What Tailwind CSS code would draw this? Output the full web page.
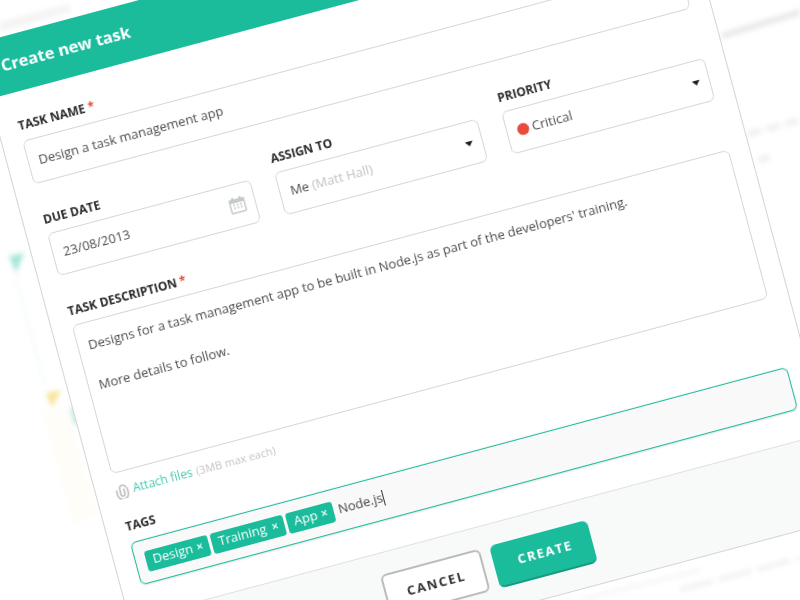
<!doctype html>
<html>
<head>
<meta charset="utf-8">
<script src="https://cdn.jsdelivr.net/npm/@tailwindcss/browser@4"></script>
</head>
<body class="m-0 bg-white font-['Open_Sans',sans-serif]">
<div class="relative w-[800px] h-[600px] overflow-hidden bg-white">
  <svg class="absolute inset-0 blur-[2.5px]" width="800" height="600" viewBox="0 0 800 600" fill="none">
    <path d="M-5 28L70 8" stroke="#f4f4f4" stroke-width="9"/>
    <path d="M722 36L800 12" stroke="#e8e8e8" stroke-width="6"/>
    <path d="M748 134L800 120" stroke="#f0f0f0" stroke-width="6" stroke-dasharray="14 5"/>
    <path d="M758 160L770 157" stroke="#f0f0f0" stroke-width="6"/>
    <path d="M9 256L24 253L16 273Z" fill="#a5e5d8"/>
    <path d="M46 393L61 390L52 408Z" fill="#f8e39b"/>
    <path d="M70 408L76 406L80 425L74 424Z" fill="#bcece2"/>
    <path d="M15 275L45 385" stroke="#fafdfc" stroke-width="6"/>
    <path d="M55 410L85 520" stroke="#fffdf8" stroke-width="26"/>
    <path d="M615 567L700 546" stroke="#f5f5f5" stroke-width="4" stroke-dasharray="18 12"/>
    <path d="M680 590L800 558" stroke="#f2f2f2" stroke-width="5" stroke-dasharray="34 6"/>
    <path d="M580 600L700 570" stroke="#f6f6f6" stroke-width="4"/>
  </svg>

  <div class="absolute left-0 top-0 origin-top-left rotate-[-15deg]">
    <div class="absolute left-[-36px] top-[36px] w-[722px] h-[684px] flex flex-col bg-white border-x border-b border-[#d4d4d4] blur-[0.35px]">
      <div class="h-[57px] shrink-0 -mx-px bg-[#1abc9c] flex items-center pl-[20px] pb-[1px] text-white font-bold text-[16.5px]">Create new task</div>

      <div class="flex-1 px-[20px] pt-[24px] flex flex-col text-[13px] text-[#4d4d4d]">
        <div class="h-5 leading-5 text-[12px] font-bold text-[#2a2a2a] uppercase mb-[5px]">Task name <span class="text-[#e74c3c]">*</span></div>
        <div class="h-[45px] border border-[#d6d6d6] rounded-[6px] flex items-center px-[10px] pt-[1px]">Design a task management app</div>

        <div class="grid grid-cols-3 gap-x-[25.5px] mt-[26.5px]">
          <div>
            <div class="h-5 leading-5 text-[12px] font-bold text-[#2a2a2a] uppercase mb-[4.5px]">Due date</div>
            <div class="h-[44px] border border-[#d6d6d6] rounded-[6px] flex items-center justify-between pl-[10px] pr-[9px]">
              <span>23/08/2013</span>
              <svg width="17" height="17" viewBox="0 0 17 17" class="mb-[1px]">
                <rect x="0.5" y="2" width="16" height="14.5" rx="1" fill="#c6caca"/>
                <rect x="2" y="6" width="13" height="9" fill="#fff"/>
                <rect x="3.5" y="0.5" width="2.5" height="3.5" fill="#c6caca"/>
                <rect x="11" y="0.5" width="2.5" height="3.5" fill="#c6caca"/>
                <path d="M4 8h2M7.5 8h2M11 8h2M4 11h2M7.5 11h2M11 11h2" stroke="#c6caca" stroke-width="1.5"/>
              </svg>
            </div>
          </div>
          <div>
            <div class="h-5 leading-5 text-[12px] font-bold text-[#2a2a2a] uppercase mb-[4.5px]">Assign to</div>
            <div class="h-[44px] border border-[#d6d6d6] rounded-[6px] flex items-center justify-between pl-[10px] pr-[9px]">
              <span>Me <span class="text-[#c2c2c2]">(Matt Hall)</span></span>
              <span class="w-0 h-0 border-x-[4.5px] border-x-transparent border-t-[5px] border-t-[#222]"></span>
            </div>
          </div>
          <div>
            <div class="h-5 leading-5 text-[12px] font-bold text-[#2a2a2a] uppercase mb-[4.5px]">Priority</div>
            <div class="h-[44px] border border-[#d6d6d6] rounded-[6px] flex items-center justify-between pl-[10px] pr-[9px]">
              <span class="flex items-center gap-[3px]"><span class="w-3 h-3 rounded-full bg-[#e74c3c]"></span>Critical</span>
              <span class="w-0 h-0 border-x-[4.5px] border-x-transparent border-t-[5px] border-t-[#222]"></span>
            </div>
          </div>
        </div>

        <div class="h-5 leading-5 text-[12px] font-bold text-[#2a2a2a] uppercase mt-[26.5px] mb-[4.5px]">Task description <span class="text-[#e74c3c]">*</span></div>
        <div class="h-[154px] border border-[#d6d6d6] rounded-[6px] px-[10px] pt-[12px] leading-[20.5px]">
          <p>Designs for a task management app to be built in Node.js as part of the developers' training.</p>
          <p class="mt-[20.5px]">More details to follow.</p>
        </div>

        <div class="flex items-center h-5 mt-[9px]">
          <svg width="14" height="15" viewBox="0 0 14 15" fill="none" stroke="#bdbdbd" stroke-width="1.6" class="ml-[-1px]">
            <path d="M9 5v5a2 2 0 0 1-4 0V4.5a3.2 3.2 0 0 1 6.4 0"/>
            <path d="M12.5 4.5v5.5a5.5 5.5 0 0 1-11 0V5"/>
          </svg>
          <span class="ml-[4px] text-[12px] text-[#48c9b0]">Attach files</span>
          <span class="ml-[4px] text-[11px] text-[#c4c4c4]">(3MB max each)</span>
        </div>

        <div class="h-5 leading-5 text-[12px] font-bold text-[#2a2a2a] uppercase mt-[16px] mb-[6px]">Tags</div>
        <div class="h-[44px] border border-[#1abc9c] rounded-[6px] bg-[#f9f9f9] shadow-[0_1px_2px_rgba(0,0,0,0.12)] flex items-center gap-[3px] pl-[10px]">
          <span class="h-[21px] w-[65px] rounded-[3px] bg-[#1abc9c] text-white flex items-center justify-between pl-[7px] pr-[6px]">Design <span class="text-[12px] font-semibold">×</span></span>
          <span class="h-[21px] w-[75px] rounded-[3px] bg-[#1abc9c] text-white flex items-center justify-between pl-[7px] pr-[6px]">Training <span class="text-[12px] font-semibold">×</span></span>
          <span class="h-[21px] w-[48px] rounded-[3px] bg-[#1abc9c] text-white flex items-center justify-between pl-[7px] pr-[6px]">App <span class="text-[12px] font-semibold">×</span></span>
          <span class="ml-[2px] flex items-center text-[#444]">Node.js<span class="w-px h-[16px] bg-[#333]"></span></span>
        </div>
      </div>

      <div class="h-[87px] shrink-0 bg-[#f8f9f9] border-t border-[#e0e0e0] flex justify-center items-start gap-[10px] pt-[21px]">
        <div class="w-[103px] h-[44px] bg-white border-2 border-[#bbb] rounded-[6px] flex items-center justify-center pt-[2px] pl-[2px] text-[13px] font-bold tracking-[1.6px] text-[#333]">CANCEL</div>
        <div class="w-[101px] h-[44px] bg-[#1abc9c] border-b-2 border-[#149b80] rounded-[6px] flex items-center justify-center pl-[4px] text-[13px] font-bold tracking-[1.4px] text-white">CREATE</div>
      </div>
    </div>
  </div>
</div>
</body>
</html>
